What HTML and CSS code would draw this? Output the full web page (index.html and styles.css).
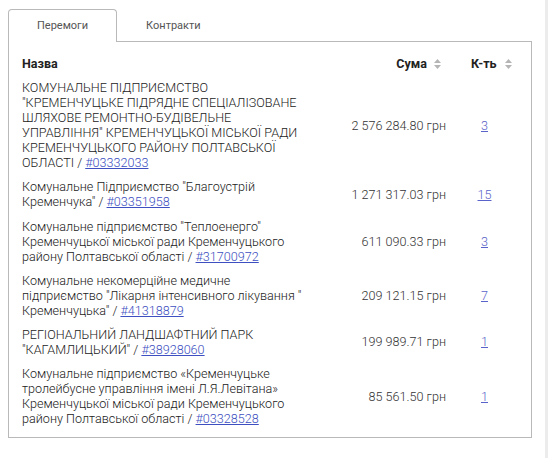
FILE: index.html
```html
<!DOCTYPE html>
<html lang="uk">
<head>
<meta charset="utf-8">
<link rel="stylesheet" href="styles.css">
</head>
<body>
<div class="page">
  <div class="content">
    <div class="tabs">
      <div class="tab active">Перемоги</div>
      <div class="tab">Контракти</div>
    </div>
    <div class="panel">
      <table class="grid">
        <colgroup>
          <col class="c-name"><col class="c-sum"><col class="c-cnt">
        </colgroup>
        <thead>
          <tr>
            <th class="h-name">Назва</th>
            <th class="h-sum">Сума<svg class="sort" width="7" height="10" viewBox="0 0 7 10"><path d="M3.5 0 L7 4 L0 4 Z M0 6 L7 6 L3.5 10 Z" fill="#b5b5b5"/></svg></th>
            <th class="h-cnt">К-ть<svg class="sort" width="7" height="10" viewBox="0 0 7 10"><path d="M3.5 0 L7 4 L0 4 Z M0 6 L7 6 L3.5 10 Z" fill="#b5b5b5"/></svg></th>
          </tr>
        </thead>
        <tbody>
          <tr>
            <td class="name">КОМУНАЛЬНЕ ПІДПРИЄМСТВО "КРЕМЕНЧУЦЬКЕ ПІДРЯДНЕ СПЕЦІАЛІЗОВАНЕ ШЛЯХОВЕ РЕМОНТНО-БУДІВЕЛЬНЕ УПРАВЛІННЯ" КРЕМЕНЧУЦЬКОЇ МІСЬКОЇ РАДИ КРЕМЕНЧУЦЬКОГО РАЙОНУ ПОЛТАВСЬКОЇ ОБЛАСТІ / <a href="#">#03332033</a></td>
            <td class="sum">2 576 284.80 грн</td>
            <td class="cnt"><a href="#">3</a></td>
          </tr>
          <tr>
            <td class="name">Комунальне Підприємство "Благоустрій Кременчука" / <a href="#">#03351958</a></td>
            <td class="sum">1 271 317.03 грн</td>
            <td class="cnt"><a href="#">15</a></td>
          </tr>
          <tr>
            <td class="name">Комунальне підприємство "Теплоенерго" Кременчуцької міської ради Кременчуцького району Полтавської області / <a href="#">#31700972</a></td>
            <td class="sum">611 090.33 грн</td>
            <td class="cnt"><a href="#">3</a></td>
          </tr>
          <tr>
            <td class="name">Комунальне некомерційне медичне підприємство "Лікарня інтенсивного лікування&nbsp;" Кременчуцька" / <a href="#">#41318879</a></td>
            <td class="sum">209 121.15 грн</td>
            <td class="cnt"><a href="#">7</a></td>
          </tr>
          <tr>
            <td class="name">РЕГІОНАЛЬНИЙ ЛАНДШАФТНИЙ ПАРК "КАГАМЛИЦЬКИЙ" / <a href="#">#38928060</a></td>
            <td class="sum">199 989.71 грн</td>
            <td class="cnt"><a href="#">1</a></td>
          </tr>
          <tr>
            <td class="name">Комунальне підприємство «Кременчуцьке тролейбусне управління імені Л.Я.Левітана» Кременчуцької міської ради Кременчуцького району Полтавської області / <a href="#">#03328528</a></td>
            <td class="sum">85 561.50 грн</td>
            <td class="cnt"><a href="#">1</a></td>
          </tr>
        </tbody>
      </table>
    </div>
  </div>
  <div class="scrollbar"></div>
</div>
</body>
</html>
```

FILE: styles.css
```css
html, body {
  margin: 0;
  padding: 0;
  background: #ffffff;
}
body {
  font-family: Roboto, "Liberation Sans", sans-serif;
  font-size: 12.6px;
  font-weight: 300;
  color: #222222;
}
.page {
  display: flex;
  height: 458px;
}
.content {
  width: 524px;
  padding: 9px 0 0 8px;
}
.scrollbar {
  margin-left: auto;
  width: 3px;
  background: #ececec;
}
.tabs {
  display: flex;
  height: 33px;
  position: relative;
  z-index: 1;
}
.tab {
  padding: 0 28px;
  line-height: 32px;
  color: #555555;
  font-size: 11px;
  font-weight: 400;
  border: 1px solid transparent;
  border-bottom: none;
}
.tab.active {
  background: #ffffff;
  border-color: #b9b9b9;
  border-radius: 4px 4px 0 0;
}
.panel {
  margin-top: -1px;
  border: 1px solid #b9b9b9;
  padding: 9px 13px 7px 13px;
  box-sizing: border-box;
  height: 397px;
}
.grid {
  border-collapse: collapse;
  width: 495px;
  table-layout: fixed;
}
.c-name { width: 290px; }
.c-sum { width: 140px; }
.c-cnt { width: 65px; }
th, td {
  padding: 5px 0 4.2px 0;
  line-height: 15px;
  vertical-align: middle;
}
th {
  font-weight: 700;
  font-size: 12.5px;
  color: #222222;
}
.h-name { text-align: left; }
.h-sum { text-align: right; padding-right: 11px; }
.h-cnt { text-align: left; padding-left: 19px; }
.sort {
  margin-left: 7px;
  vertical-align: -1px;
}
.h-cnt .sort { margin-left: 8px; }
td.name {
  padding-right: 9px;
}
td.sum {
  text-align: right;
  padding-right: 6px;
  color: #333333;
}
td.cnt {
  text-align: center;
}
a {
  color: #3d4fc1;
  text-decoration: underline;
}
td.cnt a {
  color: #5a63c9;
}
```
